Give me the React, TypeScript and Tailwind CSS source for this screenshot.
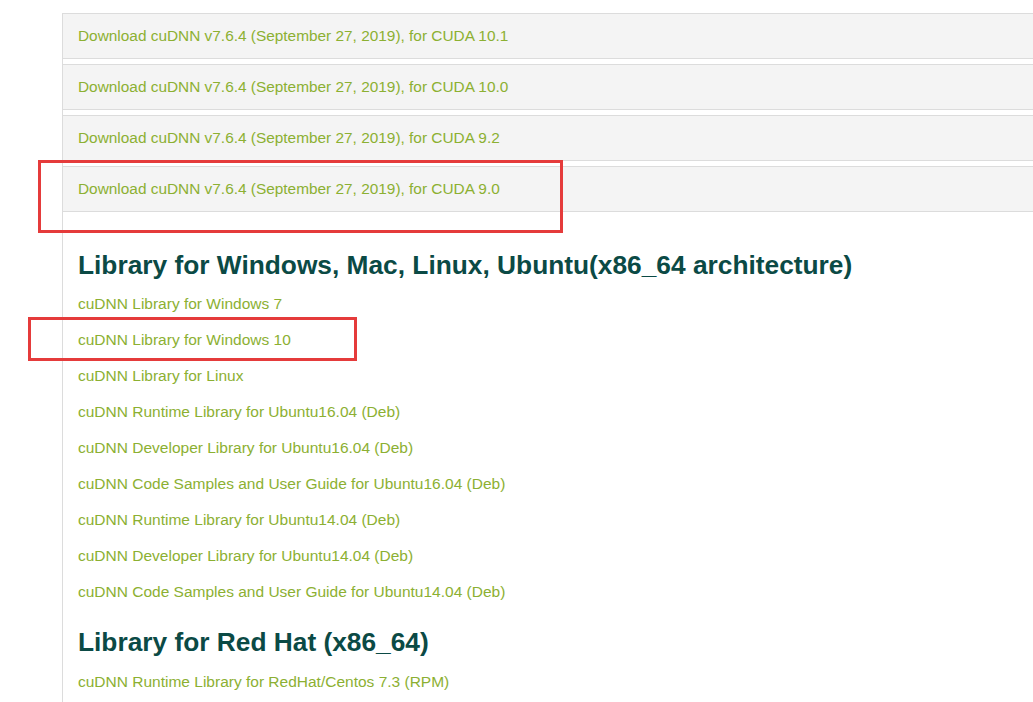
const downloads = ['10.1', '10.0', '9.2', '9.0'];

const winMacLinux = [
  'cuDNN Library for Windows 7',
  'cuDNN Library for Windows 10',
  'cuDNN Library for Linux',
  'cuDNN Runtime Library for Ubuntu16.04 (Deb)',
  'cuDNN Developer Library for Ubuntu16.04 (Deb)',
  'cuDNN Code Samples and User Guide for Ubuntu16.04 (Deb)',
  'cuDNN Runtime Library for Ubuntu14.04 (Deb)',
  'cuDNN Developer Library for Ubuntu14.04 (Deb)',
  'cuDNN Code Samples and User Guide for Ubuntu14.04 (Deb)',
];

const redHat = ['cuDNN Runtime Library for RedHat/Centos 7.3 (RPM)'];

function LinkRow({ label }: { label: string }) {
  return (
    <a href="#" className="block h-[36px] leading-[36px] text-[15.5px] text-[#8cb032]">
      {label}
    </a>
  );
}

export default function App() {
  return (
    <div
      className="relative h-[702px] w-[1033px] overflow-hidden bg-white"
      style={{ fontFamily: '"Liberation Sans", Arial, sans-serif' }}
    >
      <div className="ml-[62px] mt-[13px] min-h-[700px] border-l border-[#dcdcdc]">
        {/* Download accordion */}
        <div className="flex flex-col gap-[5px]">
          {downloads.map((v) => (
            <div
              key={v}
              className="flex h-[46px] items-center border-y border-[#dcdcdc] bg-[#f4f4f4] pl-[15px]"
            >
              <a href="#" className="text-[15.4px] text-[#8cb032]">
                Download cuDNN v7.6.4 (September 27, 2019), for CUDA {v}
              </a>
            </div>
          ))}
        </div>

        <div className="pl-[15px]">
          <h2 className="mt-[35px] mb-[3px] h-[36px] text-[26.3px] leading-[36px] font-bold text-[#0b4a45]">
            Library for Windows, Mac, Linux, Ubuntu(x86_64 architecture)
          </h2>
          {winMacLinux.map((l) => (
            <LinkRow key={l} label={l} />
          ))}

          <h2 className="mt-[14px] mb-[4px] h-[36px] text-[26.3px] leading-[36px] font-bold text-[#0b4a45]">
            Library for Red Hat (x86_64)
          </h2>
          {redHat.map((l) => (
            <LinkRow key={l} label={l} />
          ))}
        </div>
      </div>

      {/* red annotation boxes */}
      <div className="pointer-events-none absolute left-[38px] top-[160px] h-[73px] w-[525px] border-[3px] border-[#e53b3b]" />
      <div className="pointer-events-none absolute left-[28px] top-[317px] h-[44px] w-[329px] border-[3px] border-[#e53b3b]" />
    </div>
  );
}
